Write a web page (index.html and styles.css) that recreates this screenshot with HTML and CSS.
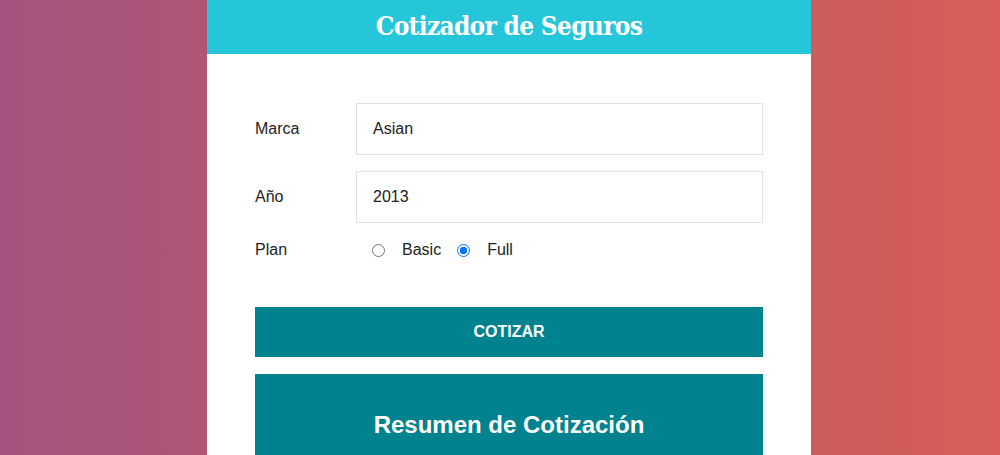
FILE: index.html
```html
<!DOCTYPE html>
<html lang="es">
<head>
<meta charset="utf-8">
<title>Cotizador de Seguros</title>
<link rel="stylesheet" href="styles.css">
</head>
<body>
<div class="page">
  <div class="card">
    <header class="header">
      <h1 class="title">Cotizador de Seguros</h1>
    </header>
    <div class="content">
      <form class="form">
        <div class="field">
          <label class="label">Marca</label>
          <div class="input">Asian</div>
        </div>
        <div class="field">
          <label class="label">Año</label>
          <div class="input">2013</div>
        </div>
        <div class="field plan">
          <label class="label">Plan</label>
          <div class="radios">
            <span class="radio"></span><span class="opt">Basic</span>
            <span class="radio checked"></span><span class="opt">Full</span>
          </div>
        </div>
        <button type="button" class="btn">COTIZAR</button>
      </form>
      <div class="summary">
        <h2 class="summary-title">Resumen de Cotización</h2>
      </div>
    </div>
  </div>
</div>
</body>
</html>
```

FILE: styles.css
```css
* { box-sizing: border-box; }
html, body { margin: 0; padding: 0; height: 100%; }
body {
  background: linear-gradient(to right, #a5547f, #d65e56);
  font-family: "Liberation Sans", Arial, sans-serif;
  overflow: hidden;
}
.page {
  padding-left: 207px;
}
.card {
  width: 604px;
  background: #fff;
  height: 455px;
  overflow: hidden;
}
.header {
  background: #26c6da;
  height: 54px;
  display: flex;
  align-items: center;
  justify-content: center;
  padding-bottom: 3px;
}
.title {
  margin: 0;
  color: #fff;
  font-family: "DejaVu Serif", serif;
  font-stretch: condensed;
  font-weight: bold;
  font-size: 26px;
  letter-spacing: -0.7px;
}
.content {
  padding: 49px 48px 0;
}
.form {
  display: flex;
  flex-direction: column;
}
.field {
  display: flex;
  align-items: center;
  margin-bottom: 16px;
}
.label {
  flex: 0 0 101px;
  font-size: 16px;
  color: #222;
}
.input {
  flex: 1;
  height: 52px;
  border: 1px solid #e1e1e1;
  padding: 0 16px;
  display: flex;
  align-items: center;
  font-size: 16px;
  color: #222;
}
.field.plan {
  margin-top: 2px;
  margin-bottom: 48px;
  height: 18px;
}
.radios {
  display: flex;
  align-items: center;
  padding-left: 16px;
}
.radio {
  width: 13px;
  height: 13px;
  border: 1px solid #767676;
  border-radius: 50%;
  margin-right: 17px;
}
.radio.checked {
  border: 1px solid #0075ff;
  background: radial-gradient(circle, #0075ff 0 3.5px, #fff 4px);
}
.opt {
  font-size: 16px;
  color: #222;
  margin-right: 16px;
}
.btn {
  height: 50px;
  border: none;
  background: #00838f;
  color: #fff;
  font-family: "Liberation Sans", Arial, sans-serif;
  font-weight: bold;
  font-size: 16px;
  width: 100%;
  padding: 0;
}
.summary {
  margin-top: 17px;
  background: #00838f;
  height: 120px;
  padding-top: 37px;
}
.summary-title {
  margin: 0;
  text-align: center;
  color: #fff;
  font-size: 24px;
  font-weight: bold;
}
```
